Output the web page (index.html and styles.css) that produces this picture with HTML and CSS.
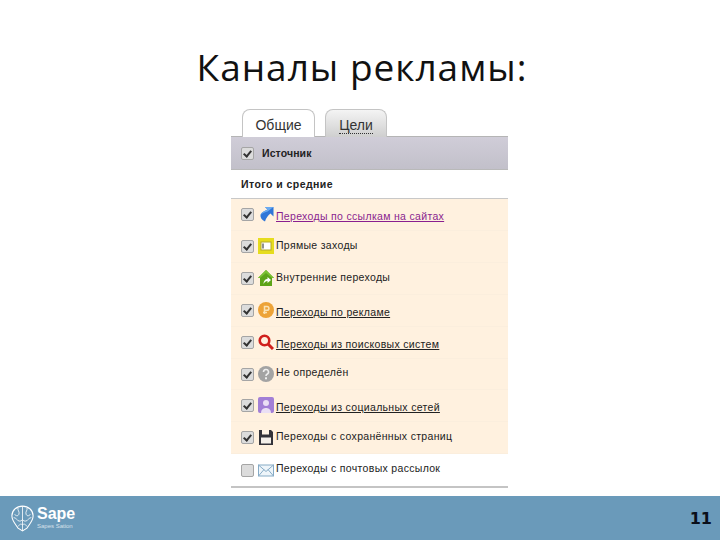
FILE: index.html
```html
<!DOCTYPE html>
<html lang="ru">

<head>
    <meta charset="UTF-8">
    <title>Каналы рекламы</title>
    <link rel="stylesheet" href="styles.css">
</head>

<body>
    <div class="slide">
        <h1 class="title">Каналы рекламы:</h1>
        <div class="report">
            <div class="tabs">
                <div class="tab active">Общие</div>
                <div class="tab"><span class="dotted">Цели</span></div>
            </div>
            <div class="head-row">
                <span class="check on"></span>
                <span>Источник</span>
            </div>
            <div class="total-row">Итого и средние</div>

            <div class="row">
                <span class="check on"></span>
                <svg class="icon" viewBox="0 0 16 16">
                    <path d="M7 1h8.500v9.500l-3-3C10 9.500 8 12 7 15.500 4 14 2 11.500 2.500 9 3 7 5 5.500 9.500 3.500z" fill="#2f76d8" />
                    <path d="M7 1h8.500L9.500 5.500C6 6.500 4 7.500 2.500 9 3 7 5 5.500 9.500 3.500z" fill="#6aaaf0" />
                </svg>
                <a class="link visited">Переходы по ссылкам на сайтах</a>
            </div>
            <div class="row">
                <span class="check on"></span>
                <svg class="icon" viewBox="0 0 16 16">
                    <rect x="0" y="0" width="16" height="16" fill="#e6dc1e" />
                    <rect x="2.500" y="3.500" width="11" height="9" fill="#b5a92a" />
                    <rect x="3.500" y="4.500" width="9" height="7" fill="#fff" />
                    <rect x="4.500" y="5.500" width="1" height="5" fill="#222" />
                </svg>
                <span class="plain">Прямые заходы</span>
            </div>
            <div class="row">
                <span class="check on"></span>
                <svg class="icon" viewBox="0 0 16 16">
                    <path d="M8 0 16 8h-2v8H2V8H0z" fill="#5da418" />
                    <path d="M8 0 16 8h-2L8 3 2 8H0z" fill="#7cc232" />
                    <path d="M5.500 14c0-3 1.500-5 4-5V7l3.500 3-3.500 3v-2c-1.500 0-3 1-4 3z" fill="#fff" />
                </svg>
                <span class="plain">Внутренние переходы</span>
            </div>
            <div class="row">
                <span class="check on"></span>
                <svg class="icon" viewBox="0 0 16 16">
                    <circle cx="8" cy="8" r="8" fill="#eda338" />
                    <path d="M6.500 12V4.500h2.500a1.800 1.800 0 0 1 0 3.800H6.500M5 10.500h4" fill="none" stroke="#fbe3b5" stroke-width="1.500" />
                </svg>
                <a class="link">Переходы по рекламе</a>
            </div>
            <div class="row">
                <span class="check on"></span>
                <svg class="icon" viewBox="0 0 16 16">
                    <circle cx="6.500" cy="6.500" r="4.800" fill="none" stroke="#d0201c" stroke-width="2.600" />
                    <path d="M10 10l5 5" stroke="#d0201c" stroke-width="3" />
                </svg>
                <a class="link">Переходы из поисковых систем</a>
            </div>
            <div class="row short">
                <span class="check on"></span>
                <svg class="icon" viewBox="0 0 16 16">
                    <circle cx="8" cy="8" r="8" fill="#a3a3a3" />
                    <path d="M5.500 6a2.500 2.500 0 1 1 3.500 2.300c-.7.400-1 .8-1 1.700" fill="none" stroke="#eee" stroke-width="1.600" />
                    <rect x="7" y="11.300" width="2" height="2" fill="#eee" />
                </svg>
                <span class="plain">Не определён</span>
            </div>
            <div class="row">
                <span class="check on"></span>
                <svg class="icon" viewBox="0 0 16 16">
                    <rect width="16" height="16" rx="2" fill="#a27fd6" />
                    <circle cx="8" cy="6" r="3" fill="#eadff5" />
                    <path d="M3 16c0-4 3-5 5-5s5 1 5 5z" fill="#eadff5" />
                </svg>
                <a class="link">Переходы из социальных сетей</a>
            </div>
            <div class="row">
                <span class="check on"></span>
                <svg class="icon" viewBox="0 0 16 16">
                    <path d="M1 1h12l2 2v13H1z" fill="#33333a" />
                    <rect x="4" y="1" width="7" height="4.500" fill="#fff5e6" />
                    <rect x="3" y="8.500" width="10" height="6" fill="#f4f0ea" />
                </svg>
                <span class="plain">Переходы с сохранённых страниц</span>
            </div>
            <div class="row blank">
                <span class="check"></span>
                <svg class="icon" viewBox="0 0 16 16">
                    <rect x="0.500" y="3" width="15" height="11" fill="#eef5fa" stroke="#86abc6" />
                    <path d="M.500 3 8 9.500 15.500 3M.500 14 6 7.500M15.500 14 10 7.500" fill="none" stroke="#86abc6" />
                </svg>
                <span class="plain">Переходы с почтовых рассылок</span>
            </div>
        </div>
        <div class="footer">
            <div class="logo">
                <svg class="brain" viewBox="0 0 26 30">
                    <path d="M13 1C6 1 1 6 1 12c0 6 4 9 7 14l5 3 5-3c3-5 7-8 7-14C25 6 20 1 13 1z" fill="none" stroke="#fff" stroke-width="1.200" />
                    <path d="M13 1v28M8 3c-1 3 2 4 1 7s-4 2-5 0M18 3c1 3-2 4-1 7s4 2 5 0M3 14c4 0 3 4 7 4 2 0 3-2 3-2M23 14c-4 0-3 4-7 4-2 0-3-2-3-2M8 24c2-3 3-3 5-2M18 24c-2-3-3-3-5-2" fill="none" stroke="#fff" stroke-width=".9" />
                </svg>
                <div class="logo-text">
                    <div class="logo-name">Sape</div>
                    <div class="logo-sub">Sapes Sation</div>
                </div>
            </div>
            <div class="page-num">11</div>
        </div>
    </div>
</body>

</html>
```

FILE: styles.css
```css
body {
    margin: 0;
    font-family: 'Liberation Sans', Arial, sans-serif;
    background: #ffffff;
}

.slide {
    width: 720px;
    height: 540px;
    display: flex;
    flex-direction: column;
    overflow: hidden;
}

.title {
    margin: 0;
    height: 109px;
    padding: 41px 0 0 4px;
    box-sizing: border-box;
    text-align: center;
    font-family: 'Open Sans', sans-serif;
    font-size: 37px;
    line-height: 52px;
    font-weight: 400;
    letter-spacing: 1px;
    color: #111;
}

.report {
    width: 277px;
    height: 387px;
    margin-left: 231px;
    font-size: 10.500px;
    color: #222;
}

.tabs {
    display: flex;
    gap: 10px;
    height: 28px;
    padding-left: 11px;
    box-sizing: border-box;
    border-bottom: 1px solid #b5b5b5;
}

.tab {
    width: 62px;
    height: 28px;
    box-sizing: border-box;
    border: 1px solid #c4c4c4;
    border-bottom: none;
    border-radius: 8px 8px 0 0;
    background: linear-gradient(#f4f4f4, #cfcfcf);
    text-align: center;
    font-size: 14px;
    line-height: 30px;
    color: #333;
}

.tab.active {
    width: 73px;
    height: 28px;
    background: #fff;
}

.dotted {
    border-bottom: 1px dotted #333;
}

.head-row {
    height: 33px;
    display: flex;
    align-items: center;
    gap: 8px;
    padding-left: 10px;
    background: linear-gradient(#d0cdd8, #c2c0ca);
    border-bottom: 1px solid #b9b9b9;
    box-sizing: border-box;
    font-size: 10.500px;
    font-weight: bold;
    letter-spacing: .1px;
}

.total-row {
    height: 29px;
    padding: 8px 0 0 10px;
    box-sizing: border-box;
    border-bottom: 1px solid #c8c8c8;
    font-size: 10.500px;
    font-weight: bold;
    letter-spacing: .45px;
}

.row {
    height: 32px;
    display: flex;
    align-items: center;
    padding-left: 10px;
    box-sizing: border-box;
    background: #fff1df;
    border-bottom: 1px solid #fbeedd;
    letter-spacing: .32px;
}

.row.short {
    height: 31px;
}

.row.blank {
    height: 34px;
    background: #fff;
    border-bottom: 2px solid #c4c4c4;
}

.check {
    width: 11px;
    height: 11px;
    border: 1px solid #a5a5a5;
    border-radius: 2px;
    background: #dcdcdc;
    position: relative;
    flex: none;
}

.check.on::after {
    content: "";
    position: absolute;
    left: 3px;
    top: 1px;
    width: 3px;
    height: 6px;
    border: solid #333;
    border-width: 0 2px 2px 0;
    transform: rotate(40deg);
}

.icon {
    width: 16px;
    height: 16px;
    margin: -1px 2px 0 4px;
    flex: none;
}

.link {
    text-decoration: underline;
    color: #222;
    margin-top: 2px;
}

.link.visited {
    color: #8a1f8f;
}

.plain {
    margin-top: -4px;
}

.footer {
    flex: 1;
    display: flex;
    justify-content: space-between;
    align-items: center;
    background: #6a9aba;
    padding: 0 8px 0 11px;
}

.logo {
    display: flex;
    align-items: center;
    gap: 3px;
    color: #fff;
}

.brain {
    width: 23px;
    height: 29px;
}

.logo-name {
    font-size: 16px;
    line-height: 16px;
    font-weight: bold;
}

.logo-sub {
    font-size: 6px;
    line-height: 8px;
    opacity: .7;
}

.page-num {
    font-family: 'DejaVu Sans', sans-serif;
    font-size: 16px;
    font-weight: bold;
    color: #0a0f1a;
}
```
